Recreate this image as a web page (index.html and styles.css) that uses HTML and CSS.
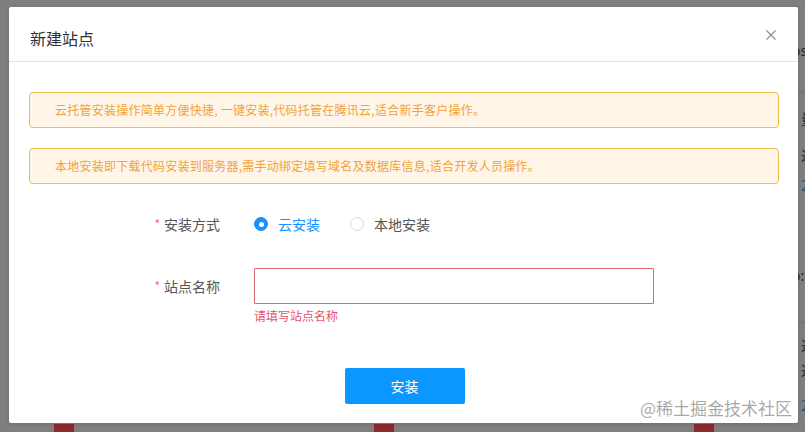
FILE: index.html
```html
<!DOCTYPE html>
<html lang="zh-CN">
<head>
<meta charset="utf-8">
<title>新建站点</title>
<link rel="stylesheet" href="styles.css">
</head>
<body>
<div class="page">
  <div class="page-main"></div>
  <div class="page-side">
    <div class="side-item s1">os</div>
    <div class="side-line l1"></div>
    <div class="side-item s2">量</div>
    <div class="side-item s3">过</div>
    <div class="side-item blue s4">2</div>
    <div class="side-item s5">o:</div>
    <div class="side-line l2"></div>
    <div class="side-item s6">过</div>
    <div class="side-item s7">过</div>
    <div class="side-item blue s8">2</div>
  </div>
  <div class="page-marks">
    <span class="mark"></span><span class="mark"></span><span class="mark"></span>
  </div>
</div>

<div class="dialog">
  <div class="dialog-header">
    <span class="dialog-title">新建站点</span>
    <svg class="close" width="10" height="10" viewBox="0 0 10 10"><path d="M0.5 0.5L9.5 9.5M9.5 0.5L0.5 9.5" stroke="#8c8c8c" stroke-width="1.1" fill="none"/></svg>
  </div>
  <div class="dialog-body">
    <div class="alert">云托管安装操作简单方便快捷, 一键安装,代码托管在腾讯云,适合新手客户操作。</div>
    <div class="alert">本地安装即下载代码安装到服务器,需手动绑定填写域名及数据库信息,适合开发人员操作。</div>
    <div class="form">
      <div class="form-item">
        <label class="form-label"><span class="req">*</span>安装方式</label>
        <div class="form-control radios">
          <span class="radio checked"><span class="radio-dot"></span><span class="radio-text">云安装</span></span>
          <span class="radio"><span class="radio-dot"></span><span class="radio-text">本地安装</span></span>
        </div>
      </div>
      <div class="form-item item-input">
        <label class="form-label"><span class="req">*</span>站点名称</label>
        <div class="form-control">
          <div class="input"></div>
          <div class="error">请填写站点名称</div>
        </div>
      </div>
    </div>
    <div class="footer"><button class="btn">安装</button></div>
  </div>
</div>

<div class="watermark">@稀土掘金技术社区</div>
</body>
</html>
```

FILE: styles.css
```css
* { box-sizing: border-box; }
html, body { margin: 0; padding: 0; }
body {
  width: 805px;
  height: 432px;
  overflow: hidden;
  background: #7f7f7f;
  font-family: "Noto Sans CJK SC", "Noto Sans", sans-serif;
  position: relative;
}
.page {
  display: grid;
  grid-template-columns: 798px 7px;
  grid-template-rows: 424px 8px;
  height: 432px;
}
.page-side {
  position: relative;
  overflow: hidden;
  color: #2a2a2a;
  font-size: 14px;
}
.side-item { position: absolute; left: 1px; line-height: 16px; }
.side-item.blue { color: #1f4f78; }
.s1 { top: 42px; left: -6px; }
.s2 { top: 110px; left: 3px; }
.s3 { top: 147px; left: 3px; }
.s4 { top: 177px; left: 3px; }
.s5 { top: 267px; left: -6px; }
.s6 { top: 337px; left: 3px; }
.s7 { top: 362px; left: 3px; }
.s8 { top: 397px; left: 3px; }
.side-line { position: absolute; left: 0; width: 7px; height: 1px; background: #707070; }
.l1 { top: 92px; }
.l2 { top: 322px; }
.page-marks {
  grid-column: 1 / 3;
  display: flex;
  gap: 300px;
  padding-left: 54px;
}
.mark { width: 20px; height: 8px; background: #8a2a2e; }

.dialog {
  position: absolute;
  left: 9px;
  top: 7px;
  width: 789px;
  height: 416px;
  background: #fff;
  border-radius: 2px;
  box-shadow: 0 1px 4px rgba(0,0,0,0.15);
}
.dialog-header {
  height: 55px;
  padding: 0 21px;
  border-bottom: 1px solid #e4e4e4;
  display: flex;
  align-items: center;
  justify-content: space-between;
}
.dialog-title {
  font-size: 16px;
  color: #303133;
  line-height: 22px;
  margin-top: 7px;
}
.close { margin-right: 1px; margin-top: 1px; }
.dialog-body { padding: 30px 19px 0 20px; }
.alert {
  height: 36px;
  border: 1px solid #f0bd4e;
  background: #fff6e9;
  border-radius: 4px;
  color: #f0a33a;
  font-size: 12px;
  line-height: 34px;
  padding-left: 25px;
  margin-bottom: 20px;
  letter-spacing: 0.25px;
}
.form { padding-top: 2px; }
.form-item { display: flex; align-items: flex-start; margin-bottom: 25px; }
.form-item:last-child { margin-bottom: 0; }
.form-label {
  width: 225px;
  padding-right: 34px;
  text-align: right;
  font-size: 14px;
  color: #555;
  line-height: 36px;
}
.req { color: #f56c6c; font-size: 12px; margin-right: 4px; position: relative; top: -1px; }
.radios { display: flex; align-items: center; height: 36px; gap: 30px; }
.radio { display: flex; align-items: center; font-size: 14px; color: #555; }
.radio-dot {
  width: 14px; height: 14px;
  border: 1px solid #d9d9d9;
  border-radius: 50%;
  margin-right: 10px;
  background: #fff;
  position: relative;
}
.radio.checked .radio-dot { background: #1890ff; border-color: #1890ff; }
.radio.checked .radio-dot::after {
  content: "";
  position: absolute;
  left: 50%; top: 50%;
  width: 5px; height: 5px;
  margin: -2.5px 0 0 -2.5px;
  border-radius: 50%;
  background: #fff;
}
.radio.checked .radio-text { color: #1890ff; }
.input {
  width: 400px;
  height: 36px;
  border: 1px solid #e0666b;
  border-radius: 1px;
}
.error { color: #e8536a; font-size: 12px; line-height: 16px; margin-top: 4px; }
.footer { display: flex; justify-content: center; margin-top: 44px; }
.btn {
  width: 120px;
  height: 36px;
  border: none;
  border-radius: 2px;
  background: #0c96ff;
  color: #fff;
  font-family: inherit;
  font-size: 14px;
  padding: 0;
  margin-left: 1px;
}
.watermark {
  position: absolute;
  left: 640px;
  top: 397px;
  font-size: 17px;
  line-height: 22px;
  color: rgba(140,140,140,0.75);
}
```
